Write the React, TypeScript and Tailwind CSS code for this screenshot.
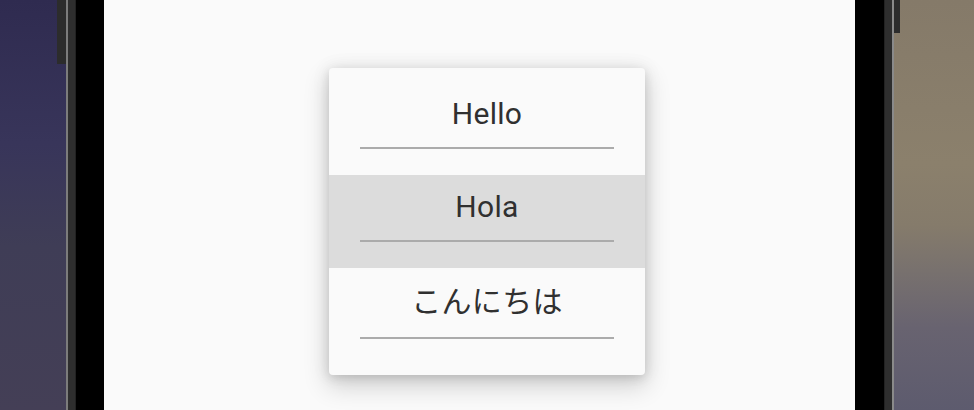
import React from "react";

function Row({ label, highlighted, textH, jp }: { label: string; highlighted?: boolean; textH: number; jp?: boolean }) {
  return (
    <div className={highlighted ? "bg-[#dcdcdc] pt-[14px] pb-[26px]" : "pt-[14px] pb-[26px]"}>
      <div
        className={
          (textH === 40 ? "h-[40px] leading-[40px]" : "h-[36px] leading-[36px]") +
          " text-center text-[30px] font-normal tracking-[0.3px] text-[#303030]"
        }
        style={{ fontFamily: jp ? "Roboto, 'Noto Sans CJK JP', sans-serif" : "Roboto, sans-serif" }}
      >
        {label}
      </div>
      <div className="mx-[31px] mt-[15px] h-[2px] bg-[#ababab]" />
    </div>
  );
}

export default function App() {
  return (
    <div className="flex h-[410px] w-[974px] overflow-hidden">
      {/* left wallpaper */}
      <div className="flex w-[66px] justify-end bg-[linear-gradient(180deg,#2f2b50_0%,#38355a_35%,#3f3d56_60%,#443f56_100%)]">
        <div className="h-[64px] w-[9px] bg-[#2c2c2c]" />
      </div>
      <div className="w-[2px] bg-[#7c7c7c]" />
      <div className="w-[8px] border-r border-[#222] bg-[#2e2e2e]" />
      <div className="w-[28px] bg-black" />

      {/* screen */}
      <div className="w-[751px] bg-[#fafafa]">
        <div className="ml-[225px] mt-[68px] h-[307px] w-[316px] overflow-hidden rounded-[4px] bg-[#fafafa] shadow-[0_10px_24px_2px_rgba(0,0,0,0.16),0_3px_10px_0_rgba(0,0,0,0.10),0_0_18px_2px_rgba(0,0,0,0.06)]">
          <div className="pt-[14px]">
            <Row label="Hello" textH={36} />
            <Row label="Hola" textH={36} highlighted />
            <Row label="こんにちは" textH={40} jp />
          </div>
        </div>
      </div>

      <div className="w-[29px] bg-black" />
      <div className="w-[8px] border-l border-[#222] bg-[#2e2e2e]" />
      <div className="w-[2px] bg-[#8a8a8a]" />
      {/* right wallpaper */}
      <div className="flex flex-1 items-start bg-[linear-gradient(180deg,#857a69_0%,#8b806c_40%,#857b6b_55%,#78716e_66%,#686370_80%,#5d5b6e_100%)]">
        <div className="h-[33px] w-[6px] bg-[#2c2c2c]" />
      </div>
    </div>
  );
}
